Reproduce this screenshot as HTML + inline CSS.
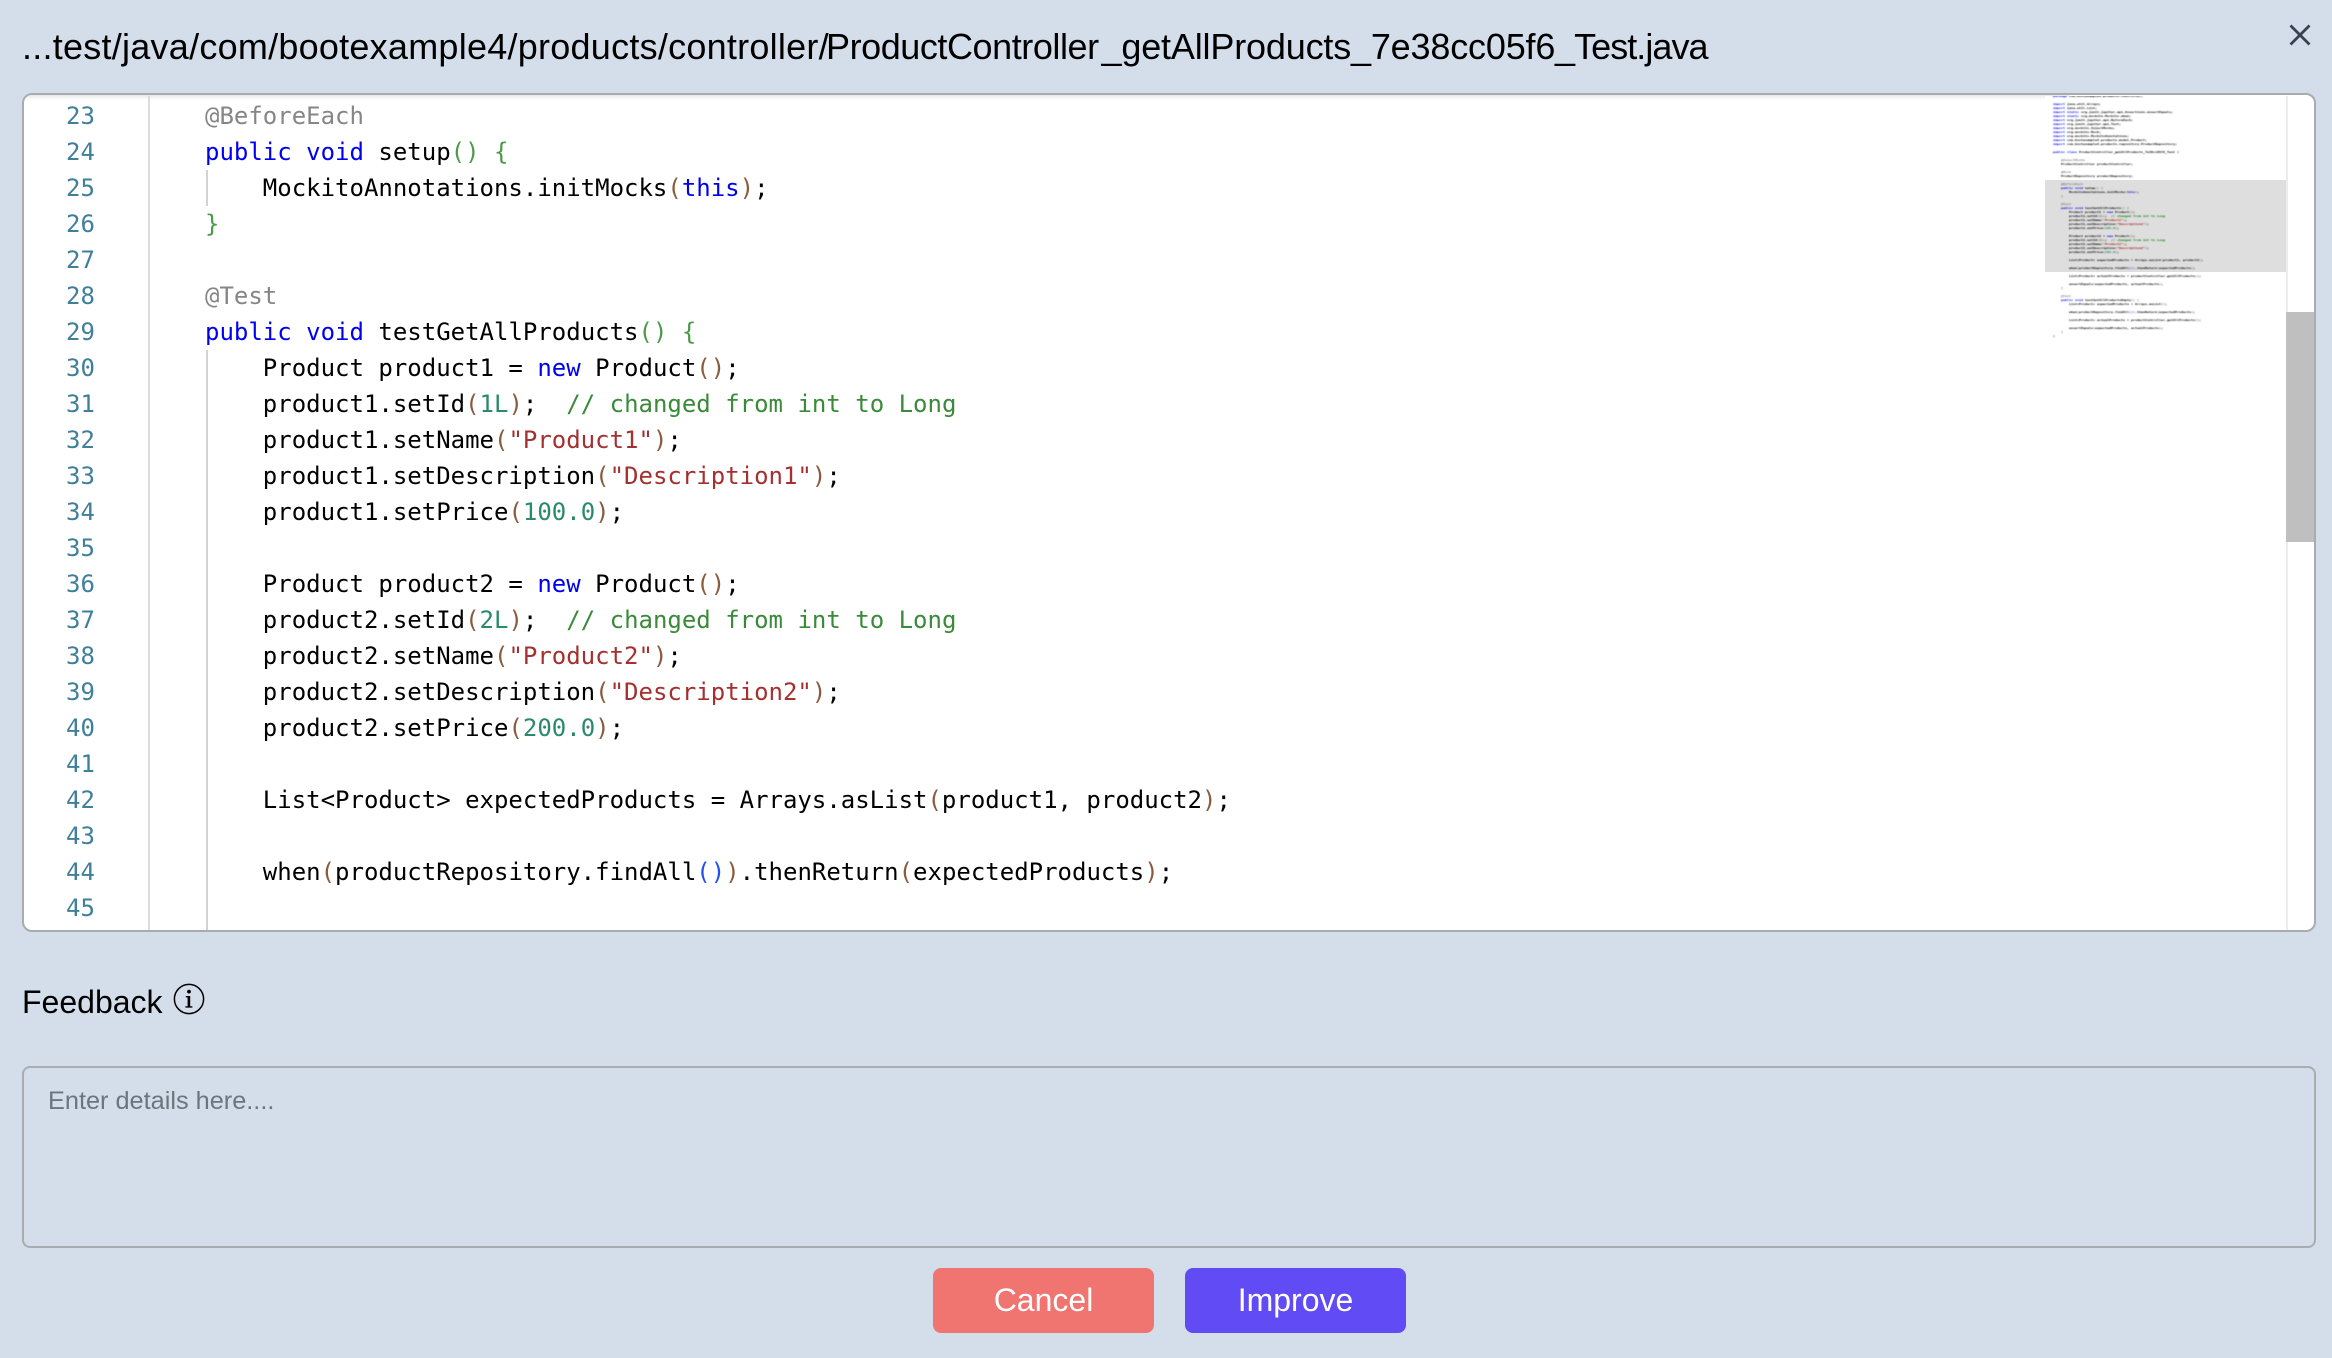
<!DOCTYPE html>
<html><head><meta charset="utf-8">
<style>
html,body{margin:0;padding:0;width:2332px;height:1358px;overflow:hidden;background:#d4deea;font-family:"Liberation Sans",Arial,sans-serif}
.abs,pre{position:absolute}
pre{margin:0;font-family:"DejaVu Sans Mono","Liberation Mono",monospace;font-size:24px;line-height:36px;color:#000}
.code{filter:blur(.35px)}
.t{filter:blur(.3px)}
.title span{position:absolute;top:0}
.k{color:#0000f0}.a{color:#868686}.s{color:#a53030}.n{color:#2a8a6a}.c{color:#3a8a3a}
.b1{color:#2050f5}.b2{color:#4a9a4a}.b3{color:#8a5a3c}
.mini .c{color:#008000}.mini .s{color:#a31515}.mini .a{color:#808080}
</style></head><body>
<div class="abs t title" style="left:0;top:22px;width:2000px;height:50px;font-size:36px;line-height:50px;color:#000;white-space:nowrap"><span style="left:22px;letter-spacing:.25px">...test/java/com/bootexample4/products/controller/</span><span style="left:826px;letter-spacing:-.44px">ProductController</span><span style="left:1101.5px;letter-spacing:-.17px">_getAllProducts</span><span style="left:1351px;letter-spacing:-.18px">_7e38cc05f6</span><span style="left:1555px;letter-spacing:-.95px">_Test.java</span></div>
<svg class="abs" style="left:2288px;top:23px" width="24" height="24" viewBox="0 0 24 24"><path d="M2.5 2.5L21.5 21.5M21.5 2.5L2.5 21.5" stroke="#374151" stroke-width="2.8" fill="none"/></svg>

<div class="abs" style="left:22px;top:93px;width:2290px;height:835px;background:#fff;border:2px solid #a9acae;border-radius:10px;overflow:hidden">
<div class="abs" style="left:0;top:0;width:2045px;height:5px;background:linear-gradient(#e8e8e8,#fff)"></div>
<div style="position:absolute;left:1px;top:1px;width:2289px;height:834px;overflow:hidden">
<div class="abs" style="left:123px;top:-1px;width:2px;height:835px;background:#dcdcdc"></div>
<div class="abs" style="left:181px;top:74px;width:2px;height:36px;background:#d3d3d3"></div>
<div class="abs" style="left:181px;top:254px;width:2px;height:580px;background:#d3d3d3"></div>
<pre class="code" style="left:41px;top:2px;color:#3f7f9a">23
24
25
26
27
28
29
30
31
32
33
34
35
36
37
38
39
40
41
42
43
44
45</pre>
<pre class="code" style="left:180px;top:2px"><span class="a">@BeforeEach</span>
<span class="k">public</span> <span class="k">void</span> setup<span class="b2">()</span> <span class="b2">{</span>
    MockitoAnnotations.initMocks<span class="b3">(</span><span class="k">this</span><span class="b3">)</span>;
<span class="b2">}</span>

<span class="a">@Test</span>
<span class="k">public</span> <span class="k">void</span> testGetAllProducts<span class="b2">()</span> <span class="b2">{</span>
    Product product1 = <span class="k">new</span> Product<span class="b3">()</span>;
    product1.setId<span class="b3">(</span><span class="n">1L</span><span class="b3">)</span>;  <span class="c">// changed from int to Long</span>
    product1.setName<span class="b3">(</span><span class="s">"Product1"</span><span class="b3">)</span>;
    product1.setDescription<span class="b3">(</span><span class="s">"Description1"</span><span class="b3">)</span>;
    product1.setPrice<span class="b3">(</span><span class="n">100.0</span><span class="b3">)</span>;

    Product product2 = <span class="k">new</span> Product<span class="b3">()</span>;
    product2.setId<span class="b3">(</span><span class="n">2L</span><span class="b3">)</span>;  <span class="c">// changed from int to Long</span>
    product2.setName<span class="b3">(</span><span class="s">"Product2"</span><span class="b3">)</span>;
    product2.setDescription<span class="b3">(</span><span class="s">"Description2"</span><span class="b3">)</span>;
    product2.setPrice<span class="b3">(</span><span class="n">200.0</span><span class="b3">)</span>;

    List&lt;Product&gt; expectedProducts = Arrays.asList<span class="b3">(</span>product1, product2<span class="b3">)</span>;

    when<span class="b3">(</span>productRepository.findAll<span class="b1">()</span><span class="b3">)</span>.thenReturn<span class="b3">(</span>expectedProducts<span class="b3">)</span>;
</pre>
<div class="abs" style="left:2020px;top:-1px;width:241px;height:835px;background:#fff"></div>
<div class="abs" style="left:2020px;top:84px;width:241px;height:92px;background:#dedede"></div>
<div class="abs mini" style="left:2020px;top:-1px;width:241px;height:280px;overflow:hidden;filter:blur(.5px)">
<pre style="left:8px;top:-1px;font-weight:bold;transform-origin:0 0;transform:scale(.1384,.1111)"><span class="k">package</span> com.bootexample4.products.controller;

<span class="k">import</span> java.util.Arrays;
<span class="k">import</span> java.util.List;
<span class="k">import</span> <span class="k">static</span> org.junit.jupiter.api.Assertions.assertEquals;
<span class="k">import</span> <span class="k">static</span> org.mockito.Mockito.when;
<span class="k">import</span> org.junit.jupiter.api.BeforeEach;
<span class="k">import</span> org.junit.jupiter.api.Test;
<span class="k">import</span> org.mockito.InjectMocks;
<span class="k">import</span> org.mockito.Mock;
<span class="k">import</span> org.mockito.MockitoAnnotations;
<span class="k">import</span> com.bootexample4.products.model.Product;
<span class="k">import</span> com.bootexample4.products.repository.ProductRepository;

<span class="k">public</span> <span class="k">class</span> ProductController_getAllProducts_7e38cc05f6_Test <span class="b1">{</span>

    <span class="a">@InjectMocks</span>
    ProductController productController;

    <span class="a">@Mock</span>
    ProductRepository productRepository;

    <span class="a">@BeforeEach</span>
    <span class="k">public</span> <span class="k">void</span> setup<span class="b2">()</span> <span class="b2">{</span>
        MockitoAnnotations.initMocks<span class="b3">(</span><span class="k">this</span><span class="b3">)</span>;
    <span class="b2">}</span>

    <span class="a">@Test</span>
    <span class="k">public</span> <span class="k">void</span> testGetAllProducts<span class="b2">()</span> <span class="b2">{</span>
        Product product1 = <span class="k">new</span> Product<span class="b3">()</span>;
        product1.setId<span class="b3">(</span><span class="n">1L</span><span class="b3">)</span>;  <span class="c">// changed from int to Long</span>
        product1.setName<span class="b3">(</span><span class="s">"Product1"</span><span class="b3">)</span>;
        product1.setDescription<span class="b3">(</span><span class="s">"Description1"</span><span class="b3">)</span>;
        product1.setPrice<span class="b3">(</span><span class="n">100.0</span><span class="b3">)</span>;

        Product product2 = <span class="k">new</span> Product<span class="b3">()</span>;
        product2.setId<span class="b3">(</span><span class="n">2L</span><span class="b3">)</span>;  <span class="c">// changed from int to Long</span>
        product2.setName<span class="b3">(</span><span class="s">"Product2"</span><span class="b3">)</span>;
        product2.setDescription<span class="b3">(</span><span class="s">"Description2"</span><span class="b3">)</span>;
        product2.setPrice<span class="b3">(</span><span class="n">200.0</span><span class="b3">)</span>;

        List&lt;Product&gt; expectedProducts = Arrays.asList<span class="b3">(</span>product1, product2<span class="b3">)</span>;

        when<span class="b3">(</span>productRepository.findAll<span class="b1">()</span><span class="b3">)</span>.thenReturn<span class="b3">(</span>expectedProducts<span class="b3">)</span>;

        List&lt;Product&gt; actualProducts = productController.getAllProducts<span class="b3">()</span>;

        assertEquals<span class="b3">(</span>expectedProducts, actualProducts<span class="b3">)</span>;
    <span class="b2">}</span>

    <span class="a">@Test</span>
    <span class="k">public</span> <span class="k">void</span> testGetAllProductsEmpty<span class="b2">()</span> <span class="b2">{</span>
        List&lt;Product&gt; expectedProducts = Arrays.asList<span class="b3">()</span>;

        when<span class="b3">(</span>productRepository.findAll<span class="b1">()</span><span class="b3">)</span>.thenReturn<span class="b3">(</span>expectedProducts<span class="b3">)</span>;

        List&lt;Product&gt; actualProducts = productController.getAllProducts<span class="b3">()</span>;

        assertEquals<span class="b3">(</span>expectedProducts, actualProducts<span class="b3">)</span>;
    <span class="b2">}</span>
<span class="b1">}</span></pre>
</div>
<div class="abs" style="left:2261px;top:-1px;width:2px;height:835px;background:#ececec"></div>
<div class="abs" style="left:2261px;top:216px;width:28px;height:230px;background:#bfbfbf"></div>
</div>
</div>

<div class="abs t" style="left:22px;top:982px;font-size:32px;line-height:40px;color:#000">Feedback</div>
<svg class="abs" style="left:173px;top:983px" width="32" height="32" viewBox="0 0 32 32"><circle cx="16" cy="16" r="14.6" fill="none" stroke="#000" stroke-width="1.5"/><circle cx="16" cy="8.6" r="1.9" fill="#000"/><path d="M12.8 13h4.4v10.2h2.2v1.4h-7v-1.4h2.2v-8.8h-1.8z" fill="#000"/></svg>

<div class="abs" style="left:22px;top:1066px;width:2290px;height:178px;border:2px solid #a9adb1;border-radius:8px"></div>
<div class="abs t" style="left:48px;top:1085px;font-size:25.3px;line-height:32px;color:#6c757d">Enter details here....</div>

<div class="abs" style="left:933px;top:1268px;width:221px;height:65px;background:#f07470;border-radius:8px;color:#fff;font-size:32px;line-height:65px;text-align:center">Cancel</div>
<div class="abs" style="left:1185px;top:1268px;width:221px;height:65px;background:#614bf5;border-radius:8px;color:#fff;font-size:32px;line-height:65px;text-align:center">Improve</div>
</body></html>
